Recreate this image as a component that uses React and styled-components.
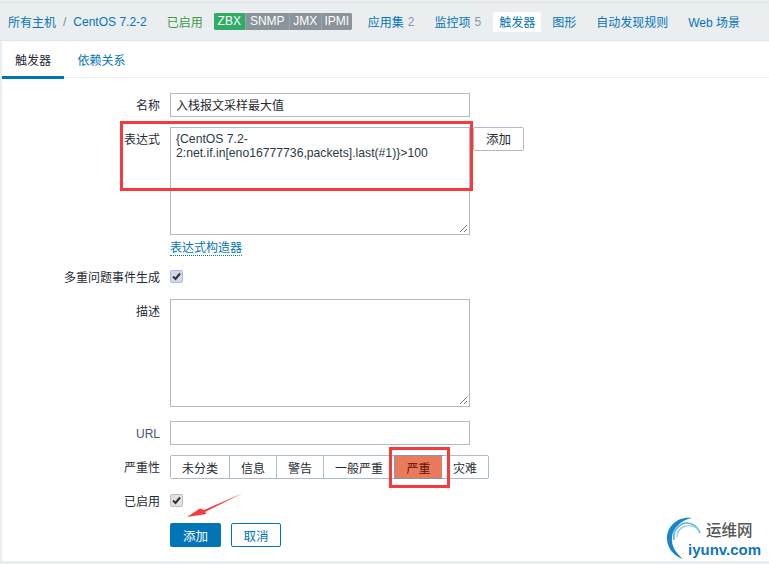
import React from 'react'
import styled, { createGlobalStyle } from 'styled-components'

const GlobalStyle = createGlobalStyle`
  html, body {
    margin: 0;
    padding: 0;
    background: #ebeef0;
  }
  body {
    font-family: "Liberation Sans", "Noto Sans CJK SC", sans-serif;
    font-size: 12px;
    color: #1f2c33;
  }
`

const Page = styled.div`
  position: relative;
  width: 769px;
  height: 564px;
  overflow: hidden;
  border-top: 2px solid #ebeef0;
  box-sizing: border-box;
`

const NavBar = styled.div`
  display: flex;
  align-items: center;
  height: 37px;
  padding-left: 8px;
  border-top: 1px solid #dfe4e7;
  border-bottom: 1px solid #dfe4e7;
`

const Crumb = styled.a`
  color: #0275b8;
  white-space: nowrap;
`

const Slash = styled.span`
  margin: 0 7px 0 7px;
  color: #768d99;
`

const Status = styled.span`
  color: #3a9a45;
  margin: 0 11px 0 20px;
  white-space: nowrap;
`

const Badges = styled.div`
  display: flex;
  height: 17px;
  margin-right: 16px;
  border-radius: 2px;
  overflow: hidden;
  background: #9ba4aa;
`

const Badge = styled.span`
  display: flex;
  align-items: center;
  justify-content: center;
  width: ${p => p.$w}px;
  margin-right: ${p => (p.$last ? 0 : 1)}px;
  background: ${p => (p.$on ? '#2fac66' : '#8a949b')};
  color: #fff;
  font-size: 12px;
  line-height: 17px;
`

const NavItem = styled.a`
  display: flex;
  align-items: center;
  height: 20px;
  margin-left: ${p => p.$gap}px;
  padding: ${p => (p.$active ? '0 6px' : '0')};
  background: ${p => (p.$active ? '#fff' : 'transparent')};
  border-radius: 2px;
  color: #0275b8;
  white-space: nowrap;
`

const Count = styled.span`
  margin-left: 4px;
  color: #8a98a3;
`

const Panel = styled.div`
  height: 520px;
  margin-left: 2px;
  background: #fff;
`

const Tabs = styled.div`
  display: flex;
  height: 36px;
  border-bottom: 1px solid #ebeef0;
`

const Tab = styled.div`
  display: flex;
  align-items: center;
  justify-content: center;
  width: ${p => p.$w}px;
  height: ${p => (p.$active ? '34px' : '36px')};
  padding-top: ${p => (p.$active ? '1px' : '0')};
  color: ${p => (p.$active ? '#1f2c33' : '#0275b8')};
  border-bottom: ${p => (p.$active ? '3px solid #0275b8' : 'none')};
`

const Form = styled.div`
  display: grid;
  grid-template-columns: 158px 1fr;
  column-gap: 10px;
  padding-top: 15px;
`

const Label = styled.div`
  text-align: right;
  line-height: 26px;
  height: 24px;
  color: ${p => (p.$url ? '#4a4f7a' : '#1f2c33')};
`

const Field = styled.div`
  display: flex;
  align-items: flex-start;
  gap: 3px;
  min-height: ${p => p.$h || 24}px;
  margin-bottom: ${p => p.$mb ?? 10}px;
`

const TextInput = styled.div`
  width: 300px;
  height: 24px;
  box-sizing: border-box;
  border: 1px solid #acbbc7;
  padding: 0 5px;
  line-height: 24px;
  font-size: 12px;
`

const Area = styled.div`
  position: relative;
  width: 300px;
  height: 108px;
  box-sizing: border-box;
  border: 1px solid #acbbc7;
  padding: 4px 5px;
  line-height: 14px;
  font-size: 12.2px;
  color: #2b3a44;
  white-space: pre-line;
`

const Grip = styled.svg`
  position: absolute;
  right: 1px;
  bottom: 1px;
`

const SmallButton = styled.div`
  display: flex;
  align-items: center;
  justify-content: center;
  width: 51px;
  height: 24px;
  padding-bottom: 2px;
  box-sizing: border-box;
  border: 1px solid #acbbc7;
  border-radius: 2px;
  font-size: 12.5px;
`

const BuilderLink = styled.a`
  display: block;
  height: 15px;
  color: #0275b8;
  font-size: 12px;
  line-height: 17px;
  border-bottom: 1px dotted #0275b8;
`

const Check = styled.div`
  display: flex;
  align-items: center;
  justify-content: center;
  width: 13px;
  height: 13px;
  margin-top: 5px;
  box-sizing: border-box;
  border-radius: 2px;
  background: ${p => (p.$focus ? '#d5d9e4' : '#e2e2e2')};
  border: 1px solid ${p => (p.$focus ? '#a3bdf0' : '#bdbdbd')};
`

const Segments = styled.div`
  display: flex;
  height: 24px;
  box-sizing: border-box;
  border: 1px solid #acbbc7;
  border-radius: 2px;
`

const Segment = styled.div`
  display: flex;
  align-items: center;
  justify-content: center;
  width: ${p => p.$w}px;
  box-sizing: border-box;
  border-right: ${p => (p.$last || p.$on ? 'none' : '1px solid #acbbc7')};
  background: ${p => (p.$on ? '#ea7a5c' : '#fff')};
  outline: ${p => (p.$on ? '1px solid #7e98a8' : 'none')};
  color: ${p => (p.$on ? '#5a1400' : '#1f2c33')};
`

const Actions = styled.div`
  display: flex;
  gap: 10px;
`

const Primary = styled.div`
  display: flex;
  align-items: center;
  justify-content: center;
  width: 51px;
  height: 24px;
  border-radius: 2px;
  background: #0275b8;
  color: #fff;
  font-size: 12.5px;
`

const Secondary = styled(Primary)`
  width: 50px;
  box-sizing: border-box;
  background: #fff;
  color: #0275b8;
  border: 1px solid #0275b8;
`

const RedBox = styled.div`
  position: absolute;
  left: ${p => p.$x}px;
  top: ${p => p.$y}px;
  width: ${p => p.$w}px;
  height: ${p => p.$h}px;
  box-sizing: border-box;
  border: 3px solid #f83a3c;
`

const Arrow = styled.svg`
  position: absolute;
  left: 184px;
  top: 490px;
`

const Logo = styled.div`
  position: absolute;
  left: 664px;
  top: 514px;
  width: 105px;
  height: 46px;
`

const LogoMark = styled.svg`
  position: absolute;
  left: 0;
  top: 0;
`

const LogoCn = styled.span`
  position: absolute;
  left: 42px;
  top: 7px;
  font-size: 15.5px;
  line-height: 16px;
  font-weight: 500;
  color: #555;
`

const LogoEn = styled.span`
  position: absolute;
  left: 24px;
  top: 26px;
  font-size: 15px;
  line-height: 15px;
  font-weight: 700;
  color: #1275bb;
`

const CheckMark = () => (
  <svg width="9" height="9" viewBox="0 0 9 9">
    <path d="M1 4.5 L3.5 7 L8 1.5" fill="none" stroke="#333" strokeWidth="2" />
  </svg>
)

const ResizeGrip = () => (
  <Grip width="9" height="9" viewBox="0 0 9 9">
    <path d="M1 8 L8 1 M5 8 L8 5" stroke="#777" strokeWidth="1" />
  </Grip>
)

const severities = [
  { name: '未分类', w: 59 },
  { name: '信息', w: 47 },
  { name: '警告', w: 47 },
  { name: '一般严重', w: 71 },
  { name: '严重', w: 47, on: true },
  { name: '灾难', w: 46, last: true },
]

const App = () => (
  <Page>
    <GlobalStyle />
    <NavBar>
      <Crumb>所有主机</Crumb>
      <Slash>/</Slash>
      <Crumb>CentOS 7.2-2</Crumb>
      <Status>已启用</Status>
      <Badges>
        <Badge $on $w={31}>ZBX</Badge>
        <Badge $w={43}>SNMP</Badge>
        <Badge $w={31}>JMX</Badge>
        <Badge $w={30} $last>IPMI</Badge>
      </Badges>
      <NavItem $gap={0}>应用集<Count>2</Count></NavItem>
      <NavItem $gap={20}>监控项<Count>5</Count></NavItem>
      <NavItem $gap={12} $active>触发器</NavItem>
      <NavItem $gap={11}>图形</NavItem>
      <NavItem $gap={20}>自动发现规则</NavItem>
      <NavItem $gap={20}>Web 场景</NavItem>
    </NavBar>
    <Panel>
      <Tabs>
        <Tab $active $w={62}>触发器</Tab>
        <Tab $w={75}>依赖关系</Tab>
      </Tabs>
      <Form>
        <Label>名称</Label>
        <Field><TextInput>入栈报文采样最大值</TextInput></Field>

        <Label>表达式</Label>
        <Field $mb={5}>
          <Area>
            {'{CentOS 7.2-\n2:net.if.in[eno16777736,packets].last(#1)}>100'}
            <ResizeGrip />
          </Area>
          <SmallButton>添加</SmallButton>
        </Field>

        <div />
        <Field $h={16} $mb={9}><BuilderLink>表达式构造器</BuilderLink></Field>

        <Label>多重问题事件生成</Label>
        <Field><Check $focus><CheckMark /></Check></Field>

        <Label>描述</Label>
        <Field $mb={14}>
          <Area><ResizeGrip /></Area>
        </Field>

        <Label $url>URL</Label>
        <Field><TextInput /></Field>

        <Label>严重性</Label>
        <Field>
          <Segments>
            {severities.map(s => (
              <Segment key={s.name} $w={s.w} $on={s.on} $last={s.last}>{s.name}</Segment>
            ))}
          </Segments>
        </Field>

        <Label>已启用</Label>
        <Field><Check><CheckMark /></Check></Field>

        <div />
        <Field $mb={0}>
          <Actions>
            <Primary>添加</Primary>
            <Secondary>取消</Secondary>
          </Actions>
        </Field>
      </Form>
    </Panel>

    <RedBox $x={120} $y={119} $w={353} $h={70} />
    <RedBox $x={389} $y={445} $w={61} $h={41} />

    <Arrow width="62" height="34" viewBox="0 0 62 34">
      <path d="M59 1 L20 18 L16 16.5 L3 25 L22.5 22 L21 20 Z" fill="#f83a3c" />
    </Arrow>

    <Logo>
      <LogoMark width="44" height="46" viewBox="0 0 44 46">
        <path d="M28 2 C13 0 2 11 3 24 C4 33 10 40 19 43 C12 37 7 30 8 21 C9 12 17 4 28 2 Z" fill="#1a86c8" />
        <path d="M36 17 C33 9 25 5 18 8 C12 11 9 17 10 24" fill="none" stroke="#5cb3e0" strokeWidth="1.6" />
        <path d="M34 14 C30 9 24 9 19 11 C15 13 13 17 13 21" fill="none" stroke="#93d2ee" strokeWidth="1.4" />
      </LogoMark>
      <LogoCn>运维网</LogoCn>
      <LogoEn>iyunv.com</LogoEn>
    </Logo>
  </Page>
)

export default App
